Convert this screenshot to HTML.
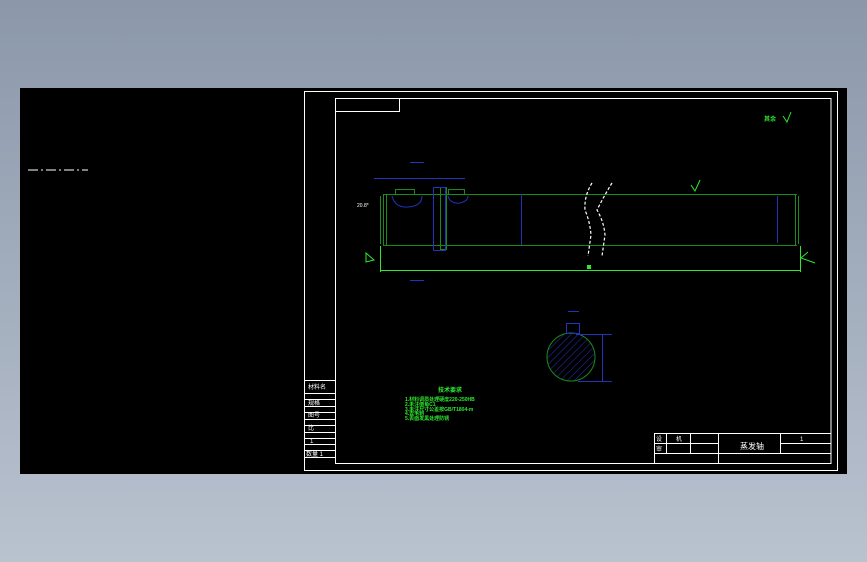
<!DOCTYPE html>
<html><head><style>
html,body{margin:0;padding:0;width:867px;height:562px;overflow:hidden;background:linear-gradient(#8b98aa,#b9c2cf);}
svg{position:absolute;left:0;top:0}
</style></head><body>
<svg width="867" height="562" viewBox="0 0 867 562" font-family="Liberation Sans, Noto Sans CJK SC, sans-serif">
<rect x="20" y="88" width="827" height="386" fill="#000"/>
<line x1="28" y1="170" x2="88" y2="170" stroke="#fff" stroke-width="1" stroke-dasharray="10,3,2,3"/>
<g fill="none" stroke="#fff" stroke-width="1">
<rect x="304.5" y="91.5" width="533" height="379"/>
<rect x="335.5" y="98.5" width="495.5" height="365"/>
<rect x="335.5" y="98.5" width="64" height="13"/>
<line x1="304" y1="380.5" x2="335" y2="380.5"/>
<line x1="304" y1="393.5" x2="335" y2="393.5"/>
<line x1="304" y1="399.5" x2="335" y2="399.5"/>
<line x1="304" y1="406.5" x2="335" y2="406.5"/>
<line x1="304" y1="412.5" x2="335" y2="412.5"/>
<line x1="304" y1="419.5" x2="335" y2="419.5"/>
<line x1="304" y1="425.5" x2="335" y2="425.5"/>
<line x1="304" y1="432.5" x2="335" y2="432.5"/>
<line x1="304" y1="438.5" x2="335" y2="438.5"/>
<line x1="304" y1="444.5" x2="335" y2="444.5"/>
<line x1="304" y1="450.5" x2="335" y2="450.5"/>
<line x1="304" y1="457.5" x2="335" y2="457.5"/>
<rect x="654.5" y="433.5" width="176.5" height="30"/>
<line x1="654" y1="443.5" x2="718" y2="443.5"/>
<line x1="780" y1="443.5" x2="831" y2="443.5"/>
<line x1="654" y1="453.5" x2="831" y2="453.5"/>
<line x1="666.5" y1="433" x2="666.5" y2="453"/>
<line x1="690.5" y1="433" x2="690.5" y2="453"/>
<line x1="718.5" y1="433" x2="718.5" y2="463"/>
<line x1="780.5" y1="433" x2="780.5" y2="453"/>
</g>
<g fill="#fff" font-size="6">
<text x="308" y="389">材料名</text><text x="308" y="405">规格</text><text x="308" y="417">图号</text><text x="308" y="430">比</text><text x="310" y="443">1</text><text x="306" y="456">数量 1</text>
<text x="656" y="441">设</text><text x="676" y="441">机</text><text x="656" y="451">审</text><text x="740" y="449" font-size="8">蒸发轴</text><text x="800" y="441">1</text>
</g>
<g fill="none" stroke="#1a8a1a" stroke-width="1">
<line x1="383" y1="194.5" x2="797" y2="194.5"/>
<line x1="383" y1="245.5" x2="797" y2="245.5"/>
<line x1="380.5" y1="196" x2="380.5" y2="244"/><line x1="383.5" y1="194" x2="383.5" y2="246"/><line x1="386.5" y1="195" x2="386.5" y2="245"/>
<line x1="795.5" y1="194" x2="795.5" y2="246"/><line x1="798.5" y1="196" x2="798.5" y2="244"/>
<rect x="440.5" y="187.5" width="6" height="62"/>
<rect x="395.5" y="189.5" width="19" height="5"/>
<rect x="448.5" y="189.5" width="16" height="5"/>
</g>
<g fill="none" stroke="#2233bb" stroke-width="1">
<line x1="374" y1="178.5" x2="465" y2="178.5"/>
<rect x="433.5" y="187.5" width="12" height="63"/>
<line x1="521.5" y1="194" x2="521.5" y2="245"/>
<line x1="777.5" y1="196" x2="777.5" y2="243"/>
<path d="M392 196 Q395 208 408 207 Q422 206 422 196"/><path d="M448 196 Q450 204 460 203 Q468 201 468 196"/>
<line x1="410" y1="162.5" x2="424" y2="162.5"/><line x1="410" y1="280.5" x2="424" y2="280.5"/>
</g>
<g stroke="#fff" stroke-width="1.2" fill="none" stroke-dasharray="3,2">
<path d="M592 183 Q584 196 585 210 Q590 222 591 235 L588 256"/>
<path d="M612 183 Q604 196 597 210 Q604 222 605 235 L602 256"/>
</g>
<g stroke="#2ee82e" stroke-width="1" fill="none">
<line x1="380.5" y1="246" x2="380.5" y2="272"/><line x1="800.5" y1="246" x2="800.5" y2="272"/>
<line x1="380" y1="270.5" x2="801" y2="270.5"/>
<path d="M366 253 L374 260 L366 262 Z"/><path d="M808 252 L801 258 L815 263"/>
<path d="M783 116 L787 122 L791 112"/><path d="M691 185 L695 191 L700 180"/>
</g>
<rect x="587" y="265" width="4" height="4" fill="#2ee82e"/>
<text x="357" y="207" fill="#fff" font-size="5">20.8*</text>
<defs><pattern id="h" width="5" height="5" patternUnits="userSpaceOnUse" patternTransform="rotate(45)"><line x1="0" y1="0" x2="0" y2="5" stroke="#2233bb" stroke-width="1"/></pattern></defs>
<circle cx="571" cy="357" r="24" fill="url(#h)" stroke="#1a8a1a"/>
<g stroke="#2233bb" fill="none"><rect x="566.5" y="323.5" width="13" height="10"/><line x1="576" y1="334.5" x2="612" y2="334.5"/><line x1="578" y1="381.5" x2="612" y2="381.5"/><line x1="602.5" y1="334" x2="602.5" y2="381"/><line x1="568" y1="311.5" x2="579" y2="311.5"/></g>
<g fill="#2ee82e" font-size="5" font-weight="bold">
<text x="438" y="392" font-size="6">技术要求</text>
<text x="405" y="401">1.材料调质处理硬度220-250HB</text>
<text x="405" y="406">2.未注倒角C1</text>
<text x="405" y="411">3.未注尺寸公差按GB/T1804-m</text>
<text x="405" y="415">4.去毛刺</text>
<text x="405" y="420">5.表面发黑处理防锈</text>
<text x="764" y="121" font-size="6">其余</text>
</g>
</svg>
</body></html>
